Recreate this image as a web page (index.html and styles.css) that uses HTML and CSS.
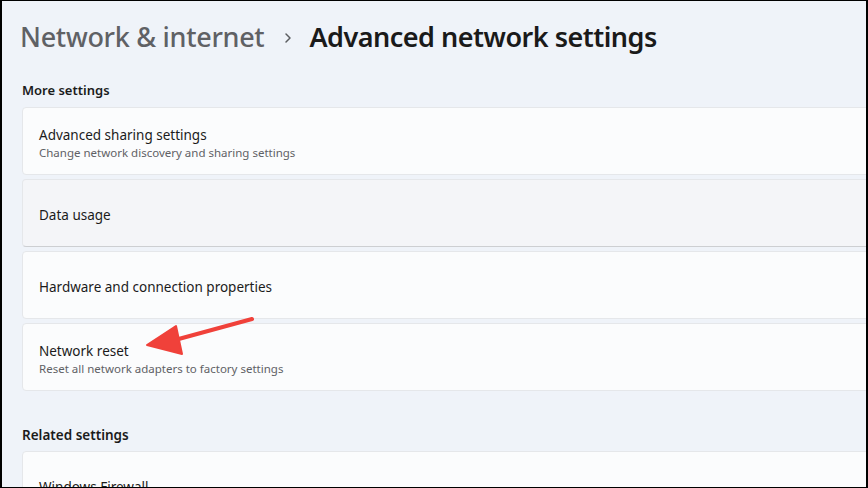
FILE: index.html
```html
<!DOCTYPE html>
<html lang="en">
<head>
	<meta charset="UTF-8">
	<title>Advanced network settings</title>
	<link rel="stylesheet" href="styles.css">
</head>
<body>
	<div class="window">
		<div class="crumbs">
			<span class="parent">Network &amp; internet</span>
			<svg class="chev" width="10" height="14" viewBox="0 0 10 14"><path d="M3 3 L7 7 L3 11" fill="none" stroke="#5b5d60" stroke-width="1.5" stroke-linecap="round" stroke-linejoin="round"/></svg>
			<span class="current">Advanced network settings</span>
		</div>

		<h3 class="group-title">More settings</h3>
		<div class="cards">
			<div class="card">
				<div class="card-title">Advanced sharing settings</div>
				<div class="card-sub">Change network discovery and sharing settings</div>
			</div>
			<div class="card hover">
				<div class="card-title">Data usage</div>
			</div>
			<div class="card">
				<div class="card-title">Hardware and connection properties</div>
			</div>
			<div class="card">
				<div class="card-title">Network reset</div>
				<div class="card-sub">Reset all network adapters to factory settings</div>
			</div>
		</div>

		<h3 class="group-title related">Related settings</h3>
		<div class="cards">
			<div class="card">
				<div class="card-title">Windows Firewall</div>
			</div>
		</div>

		<!-- annotation arrow -->
		<svg class="arrow" width="130" height="50" viewBox="0 0 130 50">
			<path d="M128 3 L40 27" stroke="#f0413a" stroke-width="4" stroke-linecap="round"/>
			<path d="M23 29 L52 10 L58 38 Z" fill="#f0413a" stroke="#f0413a" stroke-width="2" stroke-linejoin="round"/>
		</svg>
	</div>
</body>
</html>
```

FILE: styles.css
```css
*{
	margin: 0;
	padding: 0;
	box-sizing: border-box;
}
html, body{
	height: 100%;
}
body{
	background: #000;
	padding: 1px 2px 1px 2px;
	overflow: hidden;
	font-family: "Noto Sans", "Open Sans", sans-serif;
	color: #1b1b1b;
}
	.window{
		position: relative;
		height: 100%;
		background: #eff3f9;
		padding: 0 0 0 20px;
		overflow: hidden;
	}
	.crumbs{
		display: flex;
		align-items: center;
		height: 70px;
		padding-top: 1px;
		margin-left: -2px;
	}
	.crumbs .parent{
		font-size: 27px;
		font-weight: 500;
		color: #5f6165;
		letter-spacing: -0.3px;
	}
	.crumbs .chev{
		margin: 3px 16px 0 19px;
	}
	.crumbs .current{
		font-size: 27px;
		font-weight: 600;
		color: #1a1a1a;
		letter-spacing: -0.5px;
	}

	.group-title{
		font-size: 13px;
		font-weight: 600;
		color: #1b1b1b;
		margin: 9px 0 7px 0;
		height: 20px;
		line-height: 20px;
	}
	.group-title.related{
		margin-top: 34px;
		font-size: 13.5px;
		margin-bottom: 6px;
	}
	.cards{
		display: flex;
		flex-direction: column;
		gap: 4px;
		margin-right: -20px;
	}
	.card{
		height: 68px;
		background: #fbfcfd;
		border: 1px solid #e5e7ea;
		border-radius: 4px;
		padding: 3px 16px 0 16px;
		display: flex;
		flex-direction: column;
		justify-content: center;
	}
	.card.hover{
		background: #f4f5f8;
		border-bottom-color: #cdcfd2;
	}
	.card-title{
		font-size: 13.5px;
		color: #1b1b1b;
		line-height: 20px;
	}
	.card-sub{
		font-size: 11.5px;
		color: #5f6165;
		line-height: 16px;
	}

	.arrow{
		position: absolute;
		left: 122px;
		top: 315px;
	}
```
